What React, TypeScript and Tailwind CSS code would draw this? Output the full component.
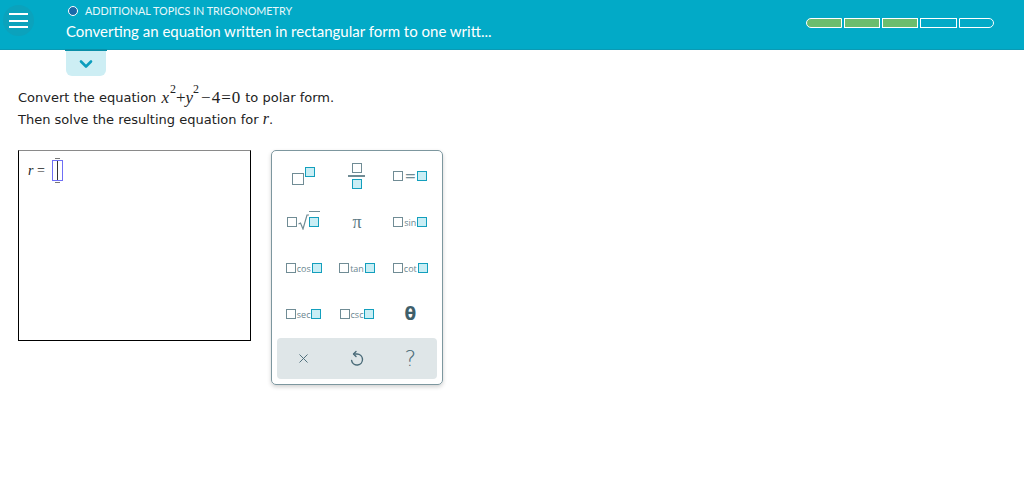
import { X } from "lucide-react"

const G = "inline-block w-[10px] h-[10px] border-[1.5px] border-[#708c95] bg-white"
const T = "inline-block w-[10px] h-[10px] border-[1.5px] border-[#139fbd] bg-[#c9eef5]"
const SERIF = "[font-family:Liberation_Serif,serif]"

function Fn({ name }: { name: string }) {
  return (
    <span className="flex items-center gap-[1px]">
      <span className={G} />
      <span className="text-[9px] leading-none text-[#6a8690] [font-family:Open_Sans,sans-serif]">{name}</span>
      <span className={T} />
    </span>
  )
}

function Cell({ children }: { children: React.ReactNode }) {
  return <div className="flex items-center justify-center h-[46px]">{children}</div>
}

export default function App() {
  return (
    <div className="w-[1024px] h-[502px] bg-white overflow-hidden [font-family:Lato,sans-serif]">
      <header className="h-[50px] bg-[#02aac7] border-b border-[#0a9ab4] flex items-start">
        <div className="ml-[3px] mt-[5px] w-[31px] h-[31px] rounded-full bg-[#0ba2bc] flex flex-col items-center justify-center gap-[4.5px]">
          <span className="block w-[19px] h-[2px] bg-white" />
          <span className="block w-[19px] h-[2px] bg-white" />
          <span className="block w-[19px] h-[2px] bg-white" />
        </div>
        <div className="ml-[32px] flex flex-col">
          <div className="flex items-center gap-[7px] h-[20px] mt-[1px] ml-[2px]">
            <span className="w-[10px] h-[10px] rounded-full border-[1.5px] border-white bg-[#1a6aa8]" />
            <span className="text-[10.8px] text-[#e8f8fb]">ADDITIONAL TOPICS IN TRIGONOMETRY</span>
          </div>
          <div className="text-[15px] text-white leading-[20px]">
            Converting an equation written in rectangular form to one writt...
          </div>
        </div>
        <div className="ml-auto mr-[30px] mt-[18px] flex gap-[2px]">
          <span className="w-[36px] h-[10px] border border-white bg-[#6bbd6e] rounded-l-full" />
          <span className="w-[36px] h-[10px] border border-white bg-[#6bbd6e]" />
          <span className="w-[36px] h-[10px] border border-white bg-[#6bbd6e]" />
          <span className="w-[37px] h-[10px] border border-white" />
          <span className="w-[35px] h-[10px] border border-white rounded-r-full" />
        </div>
      </header>

      <div className="pl-[65px]">
        <div className="w-[42px] h-[2px] bg-[#0a8fa8] -mt-[1px]" />
        <div className="ml-[1px] w-[40px] h-[25px] bg-[#cdeef4] rounded-b-[6px] flex items-center justify-center">
          <svg width="14" height="10" viewBox="0 0 14 10">
            <path d="M2 2.5 L7 7.5 L12 2.5" fill="none" stroke="#0b9dbd" strokeWidth="2.6" strokeLinecap="round" strokeLinejoin="round" />
          </svg>
        </div>
      </div>

      <div className="pl-[18px] pt-[8px] [font-family:DejaVu_Sans,sans-serif] text-[13px] text-[#222]">
        <div className="h-[24px] flex items-end leading-[20px]">
          <span>Convert the equation</span>
          <span className={SERIF + " ml-[5px] text-[17px] leading-[20px] flex items-end"}>
            <i>x</i>
            <span className="text-[12px] relative -top-[9px] ml-[1px]">2</span>
            <span>+</span>
            <i>y</i>
            <span className="text-[12px] relative -top-[9px]">2</span>
            <span className="ml-[2px] mr-[1px]">−</span>
            <span>4</span>
            <span className="mx-[1px]">=</span>
            <span>0</span>
          </span>
          <span className="ml-[5px]">to polar form.</span>
        </div>
        <div className="h-[22px] leading-[22px]">
          Then solve the resulting equation for <i className={SERIF + " text-[16px]"}>r</i>.
        </div>

        <div className="mt-[20px] flex gap-[20px] items-start">
          <div className="w-[233px] h-[191px] border border-black border-t-[#8a8a8a] pl-[9px] pt-[9px]">
            <div className="flex items-center gap-[7px]">
              <span className={SERIF + " text-[14px] text-[#222]"}><i>r</i> =</span>
              <span className="relative w-[11px] h-[21px] border-[1.5px] border-[#6f6ff5] flex justify-center">
                <span className="w-[1px] h-full bg-[#333]" />
                <span className="absolute -top-[3px] w-[5px] h-[1px] bg-[#777]" />
                <span className="absolute -bottom-[3px] w-[5px] h-[1px] bg-[#777]" />
              </span>
            </div>
          </div>

          <div className="w-[172px] h-[235px] border border-[#7d979f] rounded-[5px] shadow-[0_2px_4px_rgba(0,0,0,0.18)] px-[5px] pt-[2px]">
            <div className="grid grid-cols-3">
              <Cell>
                <span className="flex items-start">
                  <span className="w-[12px] h-[12px] mt-[6px] border-[1.5px] border-[#708c95] bg-white" />
                  <span className="ml-[1px] w-[10px] h-[10px] border-[1.5px] border-[#139fbd] bg-[#c9eef5]" />
                </span>
              </Cell>
              <Cell>
                <span className="flex flex-col items-center gap-[2px]">
                  <span className={G} />
                  <span className="w-[17px] h-[1.5px] bg-[#708c95]" />
                  <span className={T} />
                </span>
              </Cell>
              <Cell>
                <span className="flex items-center gap-[1px]">
                  <span className={G} />
                  <span className="text-[14px] leading-none text-[#708c95]">=</span>
                  <span className={T} />
                </span>
              </Cell>

              <Cell>
                <span className="flex items-center">
                  <span className={G} />
                  <svg width="11" height="16" viewBox="0 0 11 16" className="ml-[1px]">
                    <path d="M0.5 10 L2.5 9 L5 15 L9 1 L11 1" fill="none" stroke="#708c95" strokeWidth="1.2" />
                  </svg>
                  <span className="border-t-[1.2px] border-[#708c95] pt-[1px] pr-[1px]">
                    <span className={T + " block"} />
                  </span>
                </span>
              </Cell>
              <Cell>
                <span className={SERIF + " text-[18px] text-[#5d7a84] leading-none"}>π</span>
              </Cell>
              <Cell><Fn name="sin" /></Cell>

              <Cell><Fn name="cos" /></Cell>
              <Cell><Fn name="tan" /></Cell>
              <Cell><Fn name="cot" /></Cell>

              <Cell><Fn name="sec" /></Cell>
              <Cell><Fn name="csc" /></Cell>
              <Cell>
                <span className="text-[17px] font-bold text-[#3f5f6b] leading-none [font-family:DejaVu_Sans,sans-serif]">θ</span>
              </Cell>
            </div>
            <div className="mt-[1px] h-[41px] bg-[#dfe6e8] rounded-[4px] grid grid-cols-3 items-center justify-items-center">
              <X size={15} strokeWidth={1.5} color="#4a6b78" />
              <svg width="16" height="18" viewBox="0 0 16 18">
                <path d="M5 4 H8 A5.5 5.5 0 1 1 2.6 10.5" fill="none" stroke="#4a6b78" strokeWidth="1.4" strokeLinecap="round" />
                <path d="M7 1.5 L4.5 4 L7 6.5" fill="none" stroke="#4a6b78" strokeWidth="1.4" strokeLinecap="round" strokeLinejoin="round" />
              </svg>
              <span className="text-[22px] font-light text-[#4a6b78] leading-none">?</span>
            </div>
          </div>
        </div>
      </div>
    </div>
  )
}
